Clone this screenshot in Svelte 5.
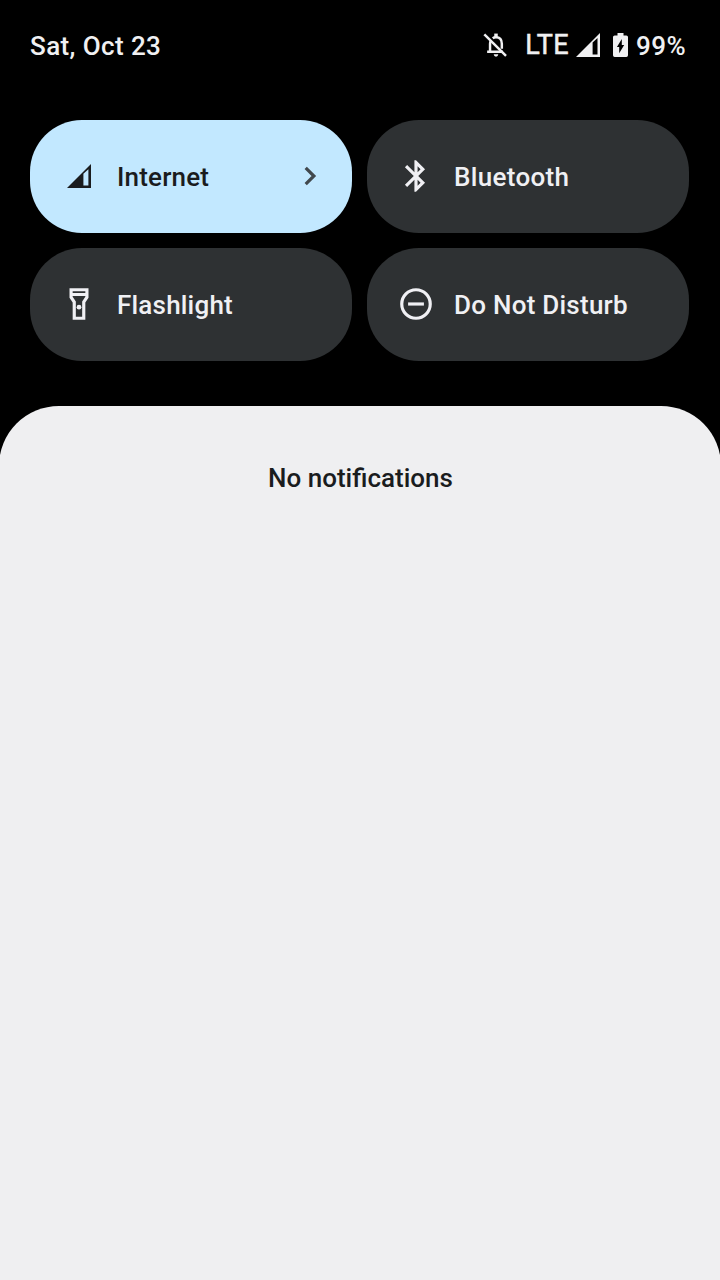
<script>
  const tiles = [
    { label: 'Internet', icon: 'signal', active: true, spacing: 0.18 },
    { label: 'Bluetooth', icon: 'bluetooth', spacing: 0.33 },
    { label: 'Flashlight', icon: 'flashlight', spacing: 0.2 },
    { label: 'Do Not Disturb', icon: 'dnd', spacing: 0.25 }
  ];
</script>

<div class="screen">
  <header>
    <span class="date">Sat, Oct 23</span>
    <div class="status">
      <svg class="bell" width="28" height="28" viewBox="0 0 24 24" fill="none" stroke="currentColor" stroke-width="2.1">
        <path d="M2 2.8 20.6 21.4" />
        <path d="M4.4 17.8h13.4M6.9 18v-7q0-1.5.6-2.7M9.2 6.2Q10.3 5.3 12 5.3q5 0 5 5.7v4.3" />
        <path d="M12 2.2v3" stroke-width="3" />
        <path d="M10 20h4q-.2 2-2 2t-2-2z" fill="currentColor" stroke="none" />
      </svg>
      <span class="lte">LTE</span>
      <svg class="cell" width="24" height="24" viewBox="0 0 24 24" fill="currentColor">
        <path fill-rule="evenodd" d="M24 0V24H0ZM16.6 9.6V21.4H21.5V5Z" />
      </svg>
      <svg class="battery" width="15" height="24" viewBox="0 0 15 24">
        <path fill="currentColor" d="M4.5 0h6v2.4h2.8q1.7 0 1.7 1.7v18.2q0 1.7-1.7 1.7H1.7Q0 24 0 22.3V4.1Q0 2.4 1.7 2.4h2.8z" />
        <path fill="#000" d="M8.8 6v6h2.4L6.2 20.3v-6.4H3.9z" />
      </svg>
      <span class="percent">99%</span>
    </div>
  </header>

  <main class="tiles">
    {#each tiles as tile}
      <button class="tile" class:active={tile.active}>
        <span class="icon">
          {#if tile.icon === 'signal'}
            <svg width="24" height="24" viewBox="0 0 24 24" fill="currentColor">
              <path fill-rule="evenodd" d="M24 0V24H0ZM16.4 9.8V21.4H21.4V5.2Z" />
            </svg>
          {:else if tile.icon === 'bluetooth'}
            <svg width="38" height="38" viewBox="0 0 24 24" fill="currentColor">
              <path d="M17.71 7.71 12 2h-1v7.59L6.41 5 5 6.41 10.59 12 5 17.59 6.41 19 11 14.41V22h1l5.71-5.71L13.41 12zM13 5.83l1.88 1.88L13 9.59zM14.88 16.29 13 18.17v-3.76z" />
            </svg>
          {:else if tile.icon === 'flashlight'}
            <svg width="38" height="38" viewBox="0 0 24 24" fill="currentColor">
              <path fill-rule="evenodd" d="M18 2H6v6l2 3v11h8V11l2-3zM16 4v1H8V4zM14 10.4V20h-4v-9.6L8 7.4V7h8v.4z" />
              <circle cx="12" cy="14" r="1.5" />
            </svg>
          {:else}
            <svg width="38" height="38" viewBox="0 0 24 24" fill="none" stroke="currentColor" stroke-width="2">
              <circle cx="12" cy="12" r="9" />
              <path d="M7 12h10" />
            </svg>
          {/if}
        </span>
        <span class="label" style="letter-spacing: {tile.spacing}px">{tile.label}</span>
        {#if tile.active}
          <svg class="chevron" width="14" height="20" viewBox="0 0 14 20" fill="none" stroke="currentColor" stroke-width="3.2">
            <path d="M1.7 1.8 9.9 10 1.7 18.2" />
          </svg>
        {/if}
      </button>
    {/each}
  </main>

  <section class="sheet">
    <p>No notifications</p>
  </section>
</div>

<style>
  :global(body) {
    margin: 0;
    background: #000;
  }
  .screen {
    display: flex;
    flex-direction: column;
    width: 720px;
    height: 1280px;
    overflow: hidden;
    background: #000;
    color: #f0f0f2;
    font: 500 26px/32px Roboto, sans-serif;
  }
  header {
    display: flex;
    justify-content: space-between;
    box-sizing: border-box;
    height: 120px;
    padding: 30px 34px 0 30px;
  }
  .date {
    letter-spacing: 0.4px;
  }
  .status {
    display: flex;
    align-items: flex-start;
  }
  .bell {
    margin: 1px 15px 0 0;
  }
  .lte {
    margin: -1px 7px 0 0;
    font-size: 27px;
    font-weight: 400;
    letter-spacing: 0.5px;
    -webkit-text-stroke: 0.5px currentColor;
  }
  .cell {
    margin: 3px 13px 0 0;
  }
  .battery {
    margin: 3px 8px 0 0;
  }
  .percent {
    letter-spacing: 0.4px;
  }
  .tiles {
    display: grid;
    grid-template-columns: 322px 322px;
    grid-auto-rows: 113px;
    gap: 15px;
    padding: 0 30px 45px;
  }
  .tile {
    display: flex;
    align-items: center;
    padding: 0 34px 1px 30px;
    border: 0;
    border-radius: 52px;
    background: #2e3133;
    color: #f0f0f4;
    font: inherit;
    text-align: left;
  }
  .tile.active {
    background: #c2e8ff;
    color: #1a1c1e;
  }
  .icon {
    display: flex;
    align-items: center;
    justify-content: center;
    width: 38px;
    height: 38px;
    margin-right: 19px;
    flex: none;
  }
  .icon svg {
    flex: none;
  }
  .label {
    flex: 1;
    padding-top: 2px;
    white-space: nowrap;
  }
  .chevron {
    color: #41484d;
  }
  .sheet {
    flex: 1;
    margin: 0 -1px;
    border-radius: 60px 60px 0 0;
    background: #efeff1;
    color: #1a1c1e;
  }
  p {
    margin: 56px 0 0 1px;
    text-align: center;
  }
</style>
